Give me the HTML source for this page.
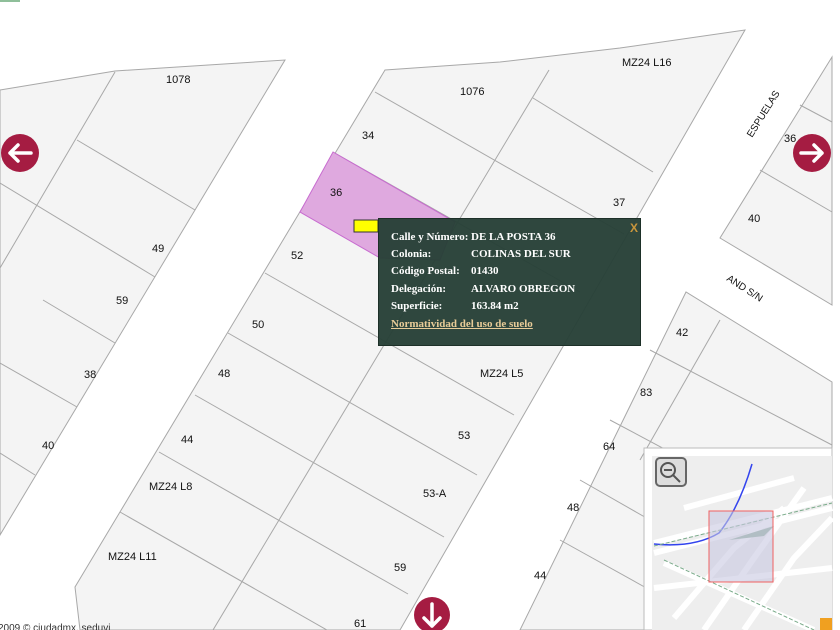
<!DOCTYPE html>
<html><head><meta charset="utf-8"><style>
body{margin:0;width:840px;height:630px;overflow:hidden;background:#fff;position:relative;font-family:"Liberation Sans",sans-serif}
svg{position:absolute;left:0;top:0}
.pop{position:absolute;left:378px;top:218px;width:263px;height:128px;background:rgba(38,64,54,0.96);border:1px solid #1d3028;box-sizing:border-box;font-family:"Liberation Serif",serif;font-weight:bold;font-size:11px;color:#fff}
.pop div{position:absolute;left:12px;white-space:nowrap}
.pop span{position:absolute;left:80px}
.pop a{color:#e8cc98;text-decoration:underline}
.x{position:absolute;top:2px;color:#c8963c;font-family:"Liberation Sans",sans-serif;font-size:12px}
.lbl{font-size:11px;fill:#111}
</style></head><body>
<svg width="840" height="630" viewBox="0 0 840 630">
<g fill="#f4f4f4" stroke="#a8a8a8" stroke-width="1">
<polygon points="0,90 115,71 285,60 0,535"/>
<polygon points="385,70 500,62 620,48 745,30 400,630 80,630 75,587"/>
<polygon points="832,57 720,238 832,305"/>
<polygon points="686,292 520,630 832,630 832,382"/>
</g>
<g stroke="#a8a8a8" stroke-width="1" fill="none">
<line x1="115" y1="72" x2="0" y2="268"/>
<line x1="77" y1="140" x2="195" y2="210"/>
<line x1="0" y1="183" x2="155" y2="277"/>
<line x1="43" y1="300" x2="115" y2="343"/>
<line x1="0" y1="363" x2="77" y2="407"/>
<line x1="0" y1="453" x2="35" y2="475"/>
<line x1="549" y1="70" x2="213" y2="630"/>
<line x1="375" y1="92" x2="624" y2="234"/>
<line x1="333" y1="152" x2="580" y2="292"/>
<line x1="265" y1="273" x2="514" y2="415"/>
<line x1="228" y1="333" x2="477" y2="475"/>
<line x1="195" y1="395" x2="444" y2="537"/>
<line x1="159" y1="452" x2="408" y2="594"/>
<line x1="120" y1="512" x2="369" y2="654"/>
<line x1="533" y1="98" x2="653" y2="172"/>
<line x1="800" y1="105" x2="832" y2="122"/>
<line x1="760" y1="170" x2="832" y2="212"/>
<line x1="650" y1="350" x2="832" y2="445"/>
<line x1="610" y1="420" x2="760" y2="500"/>
<line x1="580" y1="480" x2="650" y2="520"/>
<line x1="560" y1="540" x2="650" y2="590"/>
<line x1="720" y1="320" x2="640" y2="460"/>
</g>
<polygon points="333,152 455,222 440,260 380,258 300,212" fill="#dfa9df" stroke="#c76bcf" stroke-width="1"/>
<g class="lbl">
<text x="166" y="83">1078</text><text x="460" y="95">1076</text><text x="622" y="66">MZ24 L16</text>
<text x="362" y="139">34</text><text x="330" y="196">36</text><text x="613" y="206">37</text>
<text x="152" y="252">49</text><text x="291" y="259">52</text><text x="116" y="304">59</text>
<text x="252" y="328">50</text><text x="84" y="378">38</text><text x="218" y="377">48</text>
<text x="480" y="377">MZ24 L5</text><text x="42" y="449">40</text><text x="181" y="443">44</text>
<text x="458" y="439">53</text><text x="149" y="490">MZ24 L8</text><text x="423" y="497">53-A</text>
<text x="108" y="560">MZ24 L11</text><text x="394" y="571">59</text><text x="354" y="627">61</text>
<text x="676" y="336">42</text><text x="640" y="396">83</text><text x="603" y="450">64</text>
<text x="567" y="511">48</text><text x="534" y="579">44</text><text x="748" y="222">40</text>
<text x="784" y="142">36</text>
<text transform="translate(752,138) rotate(-58)" font-size="10">ESPUELAS</text>
<text transform="translate(726,280) rotate(33)" font-size="10">AND S/N</text>
</g>
<rect x="354" y="220" width="24" height="12" fill="#ff0" stroke="#333"/>
<g fill="#a51c42"><circle cx="20" cy="153" r="19"/><circle cx="812" cy="153" r="19"/><circle cx="432" cy="615" r="18"/></g>
<g stroke="#fff" stroke-width="3.5" fill="none" stroke-linecap="round" stroke-linejoin="round">
<path d="M31 153H10M18 145L10 153L18 161"/><path d="M801 153H822M814 145L822 153L814 161"/><path d="M432 604V626M424 618L432 626L440 618"/>
</g>
<rect x="0" y="0" width="20" height="2" fill="#8fbf9a"/>
<g transform="translate(644,448)">
<rect x="0" y="0" width="188" height="182" fill="#fff" stroke="#bbb"/>
<rect x="8" y="8" width="180" height="174" fill="#eee"/>
<g stroke="#fff" stroke-width="6" fill="none">
<path d="M10 95 L188 50"/><path d="M10 105 L188 60"/><path d="M20 115 L170 182"/><path d="M30 170 L90 100 L140 60"/><path d="M60 182 L110 110 L160 40"/><path d="M100 182 L150 110 L188 70"/><path d="M10 140 L188 120"/><path d="M40 60 L150 30"/>
</g>
<path d="M10 96 Q50 100 75 85 Q95 60 108 16" stroke="#3344ee" stroke-width="1.5" fill="none"/>
<path d="M10 98 L188 55 M20 112 L170 182" stroke="#7aab8a" stroke-width="1" fill="none" stroke-dasharray="4 2"/>
<path d="M85 92 L130 78 L120 88 Z" fill="#8fae9a"/>
<rect x="65" y="63" width="64" height="71" fill="rgba(200,200,225,0.6)" stroke="#f06060"/>
<rect x="12" y="10" width="30" height="28" rx="4" fill="#ddd" stroke="#666" stroke-width="2"/>
<circle cx="24" cy="22" r="7" fill="none" stroke="#555" stroke-width="2"/><path d="M20 22h8M29 27l7 7" stroke="#555" stroke-width="2"/>
<rect x="176" y="170" width="12" height="12" fill="#f0a020"/>
</g>
<text x="-2" y="631" font-size="10" fill="#333">2009 © ciudadmx, seduvi</text>
</svg>
<div class="pop">
<div style="top:12px">Calle y Número:<span>DE LA POSTA 36</span></div>
<div style="top:29px">Colonia:<span>COLINAS DEL SUR</span></div>
<div style="top:46px">Código Postal:<span>01430</span></div>
<div style="top:64px">Delegación:<span>ALVARO OBREGON</span></div>
<div style="top:81px">Superficie:<span>163.84 m2</span></div>
<div style="top:99px"><a>Normatividad del uso de suelo</a></div>
<div class="x" style="left:251px">X</div>
</div>
</body></html>
